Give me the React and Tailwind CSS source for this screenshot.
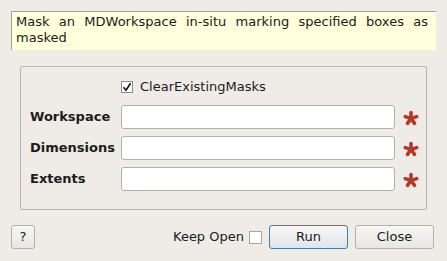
import React from "react";

function Star() {
  const arms = [-90, -18, 54, 126, 198];
  return (
    <svg width="16" height="16" viewBox="0 0 16 16">
      {arms.map((a) => {
        const r = (a * Math.PI) / 180;
        return (
          <line
            key={a}
            x1="8"
            y1="8.5"
            x2={8 + Math.cos(r) * 6}
            y2={8.5 + Math.sin(r) * 6}
            stroke="#b23a2c"
            strokeWidth="3.6"
            strokeLinecap="round"
          />
        );
      })}
    </svg>
  );
}

function Field({ label }) {
  return (
    <div className="flex items-center h-[24px]">
      <span className="w-[100px] shrink-0 pl-[9px] font-bold">{label}</span>
      <div className="w-[274px] shrink-0 h-[24px] bg-white border border-[#b4b0ab] rounded-[3px]" />
      <div className="w-[31px] shrink-0 flex justify-center pt-[2px]">
        <Star />
      </div>
    </div>
  );
}

export default function App() {
  return (
    <div
      className="w-[447px] h-[261px] bg-[#efebe7] text-[13px] text-[#1c1c1c] overflow-hidden"
      style={{ fontFamily: "'DejaVu Sans', sans-serif" }}
    >
      <div className="ml-[11px] mt-[11px] w-[425px] h-[39px] bg-[#ffffdc] border-t border-l border-[#a0a0a0] pl-[4px] pr-[8px] pt-[2px] leading-[16px] text-justify">
        Mask an MDWorkspace in-situ marking specified boxes as masked
      </div>

      <div className="ml-[20px] mt-[16px] w-[407px] h-[144px] border border-[#b9b5b0] rounded-[2px]">
        <div className="flex items-center mt-[14px] ml-[100px] h-[12px]">
          <div className="w-[12px] h-[12px] bg-white border border-[#8a8a8a] flex items-center justify-center">
            <svg width="10" height="10" viewBox="0 0 10 10">
              <path d="M1.5 5.2 L4 8.2 L8.6 1.2" fill="none" stroke="#111" strokeWidth="1.6" />
            </svg>
          </div>
          <span className="ml-[7px]">ClearExistingMasks</span>
        </div>
        <div className="flex flex-col gap-[7px] mt-[12px]">
          <Field label="Workspace" />
          <Field label="Dimensions" />
          <Field label="Extents" />
        </div>
      </div>

      <div className="flex items-center mt-[15px] h-[24px]">
        <div className="ml-[11px] w-[24px] h-[24px] border border-[#b4b0ab] rounded-[3px] bg-gradient-to-b from-[#f8f7f6] to-[#e9e6e3] flex items-center justify-center">
          ?
        </div>
        <span className="ml-[138px]">Keep Open</span>
        <div className="ml-[5px] w-[13px] h-[13px] bg-white border border-[#a8a4a0]" />
        <div className="ml-[7px] w-[79px] h-[24px] border border-[#3f7db5] rounded-[3px] bg-gradient-to-b from-[#f6f7f8] to-[#e2e5e8] flex items-center justify-center">
          Run
        </div>
        <div className="ml-[7px] w-[79px] h-[24px] border border-[#b4b0ab] rounded-[3px] bg-gradient-to-b from-[#f8f7f6] to-[#e9e6e3] flex items-center justify-center">
          Close
        </div>
      </div>
    </div>
  );
}
